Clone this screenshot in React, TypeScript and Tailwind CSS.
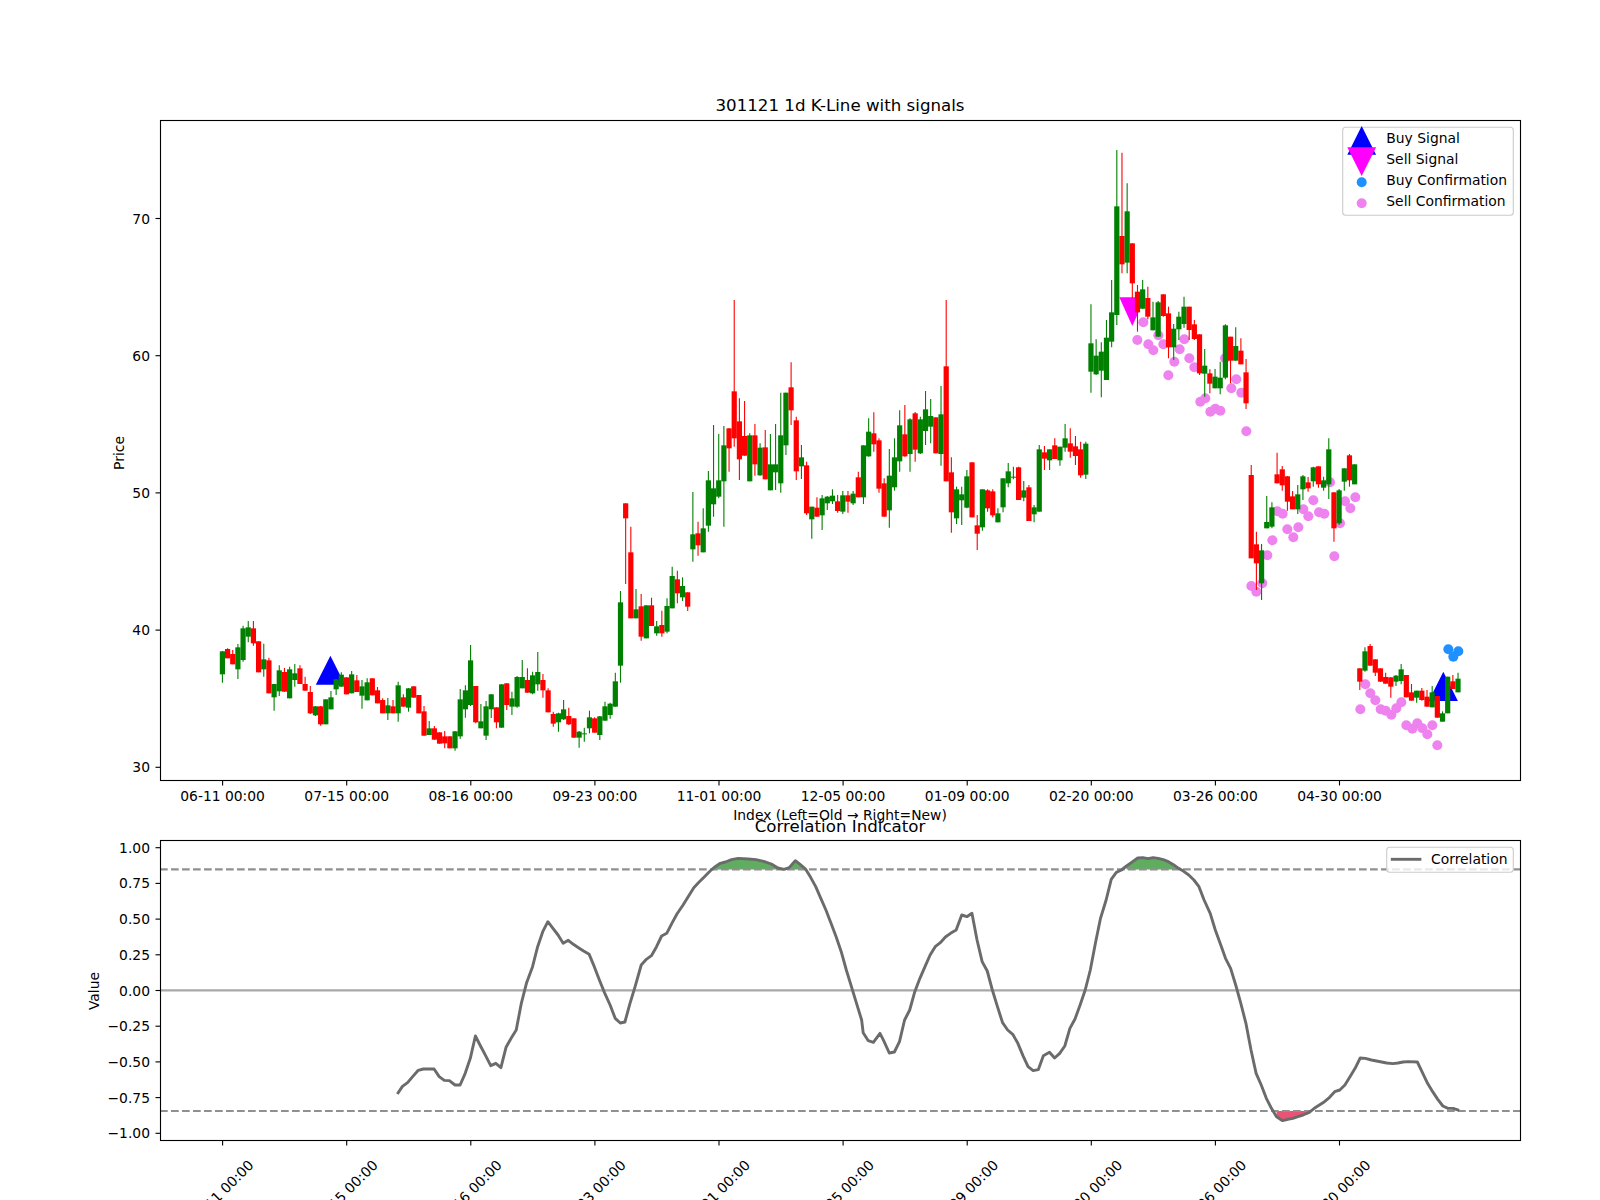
type Row = [string, number, number, number, number];

// rows are read off the chart in 3x crops: [colour, wick top, body top, body bottom, wick bottom]
const seg = (base: number, rows: Row[]): Row[] =>
  rows.map(([c, a, b, d, e]) => [c, base + a / 3, base + b / 3, base + d / 3, base + e / 3] as Row);

const candles: Row[] = [
  ...seg(480, [
    ["g", 513, 514, 583, 608], ["r", 505, 507, 535, 535], ["r", 510, 522, 553, 553], ["g", 492, 502, 568, 597],
    ["g", 437, 445, 540, 545], ["g", 423, 442, 470, 487], ["r", 423, 445, 490, 497], ["r", 484, 484, 577, 577],
    ["g", 491, 538, 568, 590], ["r", 533, 541, 640, 640], ["g", 612, 612, 652, 692], ["g", 556, 571, 634, 648],
    ["r", 564, 576, 635, 635], ["g", 560, 568, 655, 655], ["g", 552, 580, 600, 620], ["r", 556, 565, 612, 612],
    ["r", 590, 612, 632, 632], ["r", 618, 636, 700, 702], ["g", 678, 679, 706, 708], ["r", 678, 679, 733, 737],
    ["g", 658, 658, 733, 733], ["g", 633, 652, 688, 688], ["g", 597, 598, 628, 645], ["g", 577, 584, 620, 620],
    ["r", 592, 592, 643, 643], ["g", 573, 583, 640, 640], ["r", 585, 601, 636, 636], ["g", 600, 619, 647, 686],
    ["g", 595, 607, 661, 661], ["r", 595, 595, 646, 646], ["r", 621, 631, 670, 670], ["r", 655, 660, 700, 700],
    ["g", 654, 676, 700, 720], ["r", 660, 679, 700, 700], ["g", 605, 616, 700, 725], ["r", 643, 652, 680, 680],
    ["g", 624, 625, 683, 695], ["r", 619, 619, 653, 653], ["r", 645, 645, 700, 700], ["r", 678, 694, 767, 767],
    ["g", 723, 745, 765, 765], ["r", 738, 745, 779, 779], ["r", 757, 757, 791, 791], ["r", 753, 769, 790, 805],
    ["r", 769, 769, 805, 805], ["g", 753, 754, 805, 812], ["g", 627, 658, 769, 776], ["g", 616, 631, 688, 713],
    ["g", 495, 541, 675, 678], ["r", 618, 618, 727, 730], ["g", 672, 724, 745, 745], ["g", 663, 679, 767, 780],
    ["g", 642, 643, 688, 714], ["r", 682, 682, 727, 745], ["g", 613, 613, 743, 743], ["r", 610, 610, 675, 690],
    ["g", 635, 655, 680, 705], ["g", 588, 591, 680, 683], ["g", 540, 591, 625, 625], ["r", 565, 600, 638, 638],
    ["g", 575, 586, 640, 643], ["g", 516, 576, 613, 632], ["r", 582, 600, 631, 653], ["r", 625, 631, 697, 697],
    ["r", 695, 702, 731, 740], ["g", 698, 700, 727, 755], ["g", 660, 688, 718, 720], ["r", 683, 708, 733, 735],
    ["r", 715, 715, 773, 773], ["g", 753, 755, 773, 803], ["g", 743, 760, 761, 785], ["g", 692, 712, 745, 760],
    ["r", 712, 715, 758, 758], ["g", 708, 709, 765, 780], ["g", 665, 679, 722, 722], ["g", 668, 671, 705, 716],
    ["g", 578, 604, 680, 680], ["g", 333, 367, 557, 608], ["r", 70, 70, 115, 312], ["r", 140, 217, 415, 415],
    ["g", 327, 388, 415, 415], ["r", 342, 379, 470, 482], ["g", 376, 376, 475, 475], ["r", 353, 376, 438, 438],
    ["g", 423, 439, 460, 467],
  ]),
  ...seg(540, [
    ["r", 212, 255, 280, 290], ["g", 175, 198, 275, 280], ["g", 80, 108, 205, 205], ["r", 92, 118, 160, 190],
    ["g", 112, 138, 172, 183], ["r", 157, 157, 200, 213],
  ]),
  ...seg(280, [
    ["g", 636, 763, 808, 845], ["r", 725, 760, 796, 827], ["g", 685, 745, 817, 817], ["g", 573, 601, 737, 755],
    ["g", 435, 625, 673, 710], ["g", 462, 601, 650, 655], ["g", 438, 496, 604, 740], ["r", 445, 445, 505, 575],
    ["r", 60, 334, 475, 500], ["r", 355, 424, 538, 600], ["r", 363, 468, 527, 527], ["g", 460, 466, 604, 604],
    ["r", 432, 466, 553, 587], ["g", 490, 503, 586, 587], ["r", 450, 502, 598, 598], ["g", 462, 553, 631, 631],
    ["g", 432, 553, 577, 630], ["g", 338, 466, 610, 638], ["g", 338, 338, 496, 525], ["r", 247, 322, 391, 435],
    ["r", 410, 421, 574, 600], ["g", 495, 532, 559, 597], ["r", 545, 556, 700, 705], ["g", 680, 680, 718, 776],
    ["r", 652, 683, 710, 710], ["g", 645, 655, 706, 750], ["g", 648, 650, 670, 690], ["g", 628, 647, 664, 672],
    ["r", 645, 664, 693, 698], ["g", 633, 646, 695, 702], ["r", 633, 646, 665, 698], ["g", 633, 641, 670, 675],
    ["r", 575, 592, 652, 652], ["g", 496, 496, 652, 672], ["g", 415, 455, 529, 530], ["r", 397, 460, 493, 515],
    ["r", 475, 481, 626, 638], ["r", 595, 610, 710, 710], ["g", 507, 587, 691, 743], ["g", 475, 532, 622, 632],
    ["g", 391, 436, 544, 575], ["r", 375, 463, 529, 530], ["g", 415, 418, 522, 575], ["r", 396, 400, 509, 545],
    ["g", 410, 418, 520, 522], ["g", 333, 388, 453, 495], ["g", 357, 408, 440, 490], ["r", 412, 412, 520, 520],
    ["g", 318, 403, 522, 557], ["r", 60, 259, 604, 604], ["r", 532, 577, 697, 758], ["g", 620, 628, 715, 732],
    ["g", 620, 643, 661, 735], ["g", 570, 589, 683, 685], ["r", 547, 547, 712, 712], ["r", 705, 736, 761, 810],
    ["g", 628, 628, 742, 752], ["r", 628, 631, 685, 695], ["r", 628, 634, 706, 712], ["g", 685, 700, 727, 727],
    ["g", 595, 595, 682, 697], ["g", 549, 574, 610, 622], ["g", 560, 590, 591, 598], ["r", 560, 562, 660, 660],
    ["g", 603, 631, 653, 664], ["r", 615, 622, 723, 723], ["g", 675, 682, 703, 727], ["g", 495, 508, 695, 695],
    ["r", 498, 517, 536, 570], ["g", 508, 508, 541, 570], ["r", 475, 496, 537, 537], ["g", 500, 500, 541, 557],
    ["g", 432, 475, 503, 515], ["r", 445, 490, 515, 533], ["r", 468, 499, 528, 555], ["r", 485, 508, 586, 593],
    ["g", 485, 491, 584, 597],
  ]),
  ...seg(110, [
    ["g", 583, 700, 785, 848], ["g", 688, 737, 793, 795], ["g", 697, 725, 782, 862], ["g", 630, 683, 810, 810],
    ["g", 510, 607, 695, 712], ["g", 120, 289, 615, 645], ["r", 128, 378, 463, 490], ["g", 220, 304, 458, 490],
    ["r", 400, 400, 520, 565], ["r", 525, 545, 607, 665], ["g", 510, 538, 596, 597], ["r", 530, 564, 620, 628],
    ["g", 575, 622, 661, 661], ["g", 573, 577, 680, 680], ["r", 553, 553, 618, 620], ["r", 590, 610, 712, 745],
    ["g", 642, 656, 712, 750], ["g", 605, 620, 658, 690], ["g", 560, 590, 642, 653], ["r", 590, 590, 660, 690],
    ["r", 630, 643, 687, 690], ["r", 673, 673, 790, 795], ["g", 717, 767, 791, 860], ["r", 778, 790, 821, 850],
    ["g", 777, 800, 835, 835], ["g", 755, 803, 835, 853], ["g", 643, 646, 803, 808], ["r", 680, 680, 752, 820],
    ["g", 652, 708, 752, 752], ["r", 685, 722, 763, 763], ["r", 747, 787, 880, 897],
  ]),
  ...seg(420, [
    ["r", 135, 165, 415, 415], ["r", 335, 373, 430, 510], ["g", 372, 391, 490, 540], ["g", 228, 306, 325, 325],
    ["g", 247, 262, 320, 325], ["r", 98, 163, 190, 190], ["r", 138, 148, 196, 212], ["r", 168, 169, 245, 272],
    ["r", 213, 229, 268, 268], ["g", 195, 223, 268, 282], ["g", 165, 169, 208, 240], ["r", 171, 187, 205, 215],
    ["g", 140, 142, 184, 200], ["r", 139, 139, 193, 203], ["g", 170, 181, 203, 212], ["g", 55, 88, 193, 237],
    ["r", 217, 217, 325, 365], ["g", 207, 211, 310, 315], ["g", 145, 145, 185, 212], ["r", 102, 106, 181, 200],
    ["g", 133, 133, 193, 193],
  ]),
  ...seg(620, [
    ["r", 145, 145, 185, 210], ["g", 82, 94, 152, 155], ["r", 72, 78, 137, 137], ["r", 118, 118, 158, 168],
    ["r", 145, 145, 185, 185], ["r", 158, 171, 191, 191], ["r", 172, 172, 200, 233], ["g", 165, 167, 185, 198],
    ["g", 132, 148, 183, 193], ["r", 165, 165, 232, 232], ["r", 192, 217, 242, 242], ["g", 212, 212, 233, 248],
    ["r", 204, 212, 240, 242], ["r", 210, 230, 260, 260], ["g", 198, 217, 262, 262], ["r", 228, 228, 293, 293],
    ["g", 274, 280, 305, 305], ["g", 170, 170, 280, 280], ["r", 165, 184, 207, 207], ["g", 158, 176, 217, 217],
  ]),
];

const barX = (i: number) => 222.4 + 5.17 * i;

const sellDots: [number, number][] = [
  ...([
    [190, 637], [172, 690], [205, 703], [220, 721], [235, 676], [250, 703], [265, 796], [283, 755], [299, 718],
    [313, 688], [328, 745], [343, 772], [361, 875], [376, 865], [391, 905], [406, 896], [421, 902], [435, 745],
    [454, 835], [469, 808], [484, 848], [499, 964],
  ] as [number, number][]).map(([x, y]) => [1080 + x / 3, 110 + y / 3] as [number, number]),
  ...([
    [154, 498], [169, 515], [187, 490], [202, 406], [217, 361], [232, 274], [248, 281], [262, 328], [280, 352],
    [295, 322], [310, 268], [325, 289], [340, 241], [357, 277], [373, 281], [390, 187], [403, 409], [420, 310],
    [435, 244], [451, 265], [466, 232],
  ] as [number, number][]).map(([x, y]) => [1200 + x / 3, 420 + y / 3] as [number, number]),
  ...([
    [121, 268], [136, 193], [151, 220], [166, 241], [182, 268], [197, 272], [214, 284], [229, 265], [244, 247],
    [259, 316], [277, 326], [292, 310], [307, 325], [322, 343], [337, 316], [352, 376],
  ] as [number, number][]).map(([x, y]) => [1320 + x / 3, 620 + y / 3] as [number, number]),
];

const buyDots: [number, number][] = [
  [1320 + 385 / 3, 620 + 88 / 3],
  [1320 + 400 / 3, 620 + 110 / 3],
  [1320 + 415 / 3, 620 + 94 / 3],
];

const corrLeft: [number, number][] = [
  [622, 912], [632, 889], [642, 878], [652, 860], [663, 841], [673, 837], [694, 837], [704, 860], [714, 871],
  [724, 872], [735, 885], [745, 885], [755, 850], [765, 805], [775, 738], [785, 768], [795, 797], [805, 827],
  [815, 820], [825, 833], [835, 772], [845, 745], [855, 720], [865, 640], [875, 580], [887, 530], [897, 470],
  [907, 425], [917, 395], [927, 415], [937, 435], [947, 460], [957, 451], [967, 463], [977, 473], [987, 483],
  [998, 493], [1008, 530], [1018, 570], [1028, 608], [1039, 645], [1049, 685], [1059, 699], [1068, 696],
  [1078, 640], [1088, 590], [1100, 525], [1110, 508], [1120, 497], [1130, 470], [1140, 438], [1150, 430],
  [1160, 400], [1170, 372], [1182, 345], [1192, 320], [1203, 293], [1213, 277], [1223, 262], [1235, 243],
  [1245, 230], [1255, 220], [1265, 216], [1277, 209], [1290, 205], [1310, 207], [1325, 209], [1340, 214],
  [1355, 222], [1368, 234], [1380, 238], [1390, 233], [1402, 212], [1412, 224], [1422, 237], [1432, 262],
  [1442, 290], [1452, 325], [1462, 360], [1472, 400], [1482, 440], [1492, 485], [1502, 540], [1512, 590],
  [1522, 640], [1532, 690], [1535, 728], [1545, 752], [1555, 757], [1568, 730],
];

const corrRight: [number, number][] = [
  [164, 752], [175, 789], [185, 786], [195, 755], [205, 690], [215, 660], [225, 605], [235, 565], [245, 530],
  [255, 495], [265, 470], [275, 458], [285, 441], [295, 430], [306, 420], [317, 375], [327, 380], [337, 370],
  [347, 450], [357, 515], [367, 543], [377, 600], [387, 650], [397, 698], [407, 720], [417, 733], [427, 760],
  [437, 797], [447, 830], [457, 842], [467, 839], [477, 797], [489, 787], [499, 804], [509, 790], [519, 768],
  [529, 715], [539, 687], [549, 645], [559, 600], [569, 540], [579, 460], [589, 385], [600, 330], [610, 268],
  [620, 247], [630, 240], [640, 228], [652, 215], [662, 204], [672, 203], [682, 206], [692, 203], [702, 205],
  [712, 209], [722, 215], [732, 224], [742, 235], [752, 244], [762, 255], [772, 270], [782, 290], [792, 330],
  [804, 370], [814, 420], [824, 462], [834, 505], [844, 535], [854, 585], [864, 640], [874, 700], [884, 780],
  [894, 850], [904, 885], [914, 925], [924, 955], [934, 980], [946, 992], [956, 988], [966, 985], [976, 980],
  [986, 975], [998, 967], [1008, 955], [1018, 945], [1028, 935], [1038, 922], [1048, 905], [1058, 900],
  [1068, 885], [1078, 860], [1088, 835], [1098, 804], [1108, 805], [1120, 810], [1130, 813], [1140, 816],
  [1150, 819], [1162, 821], [1172, 819], [1182, 816], [1192, 815], [1210, 816], [1220, 848], [1230, 880],
  [1240, 905], [1250, 928], [1260, 948], [1270, 955], [1280, 955], [1292, 961],
];

const corr: [number, number][] = [
  ...corrLeft.map(([x, y]) => [80 + x / 1.96, 790 + y / 3] as [number, number]),
  ...corrRight.map(([x, y]) => [800 + x / 1.96, 790 + y / 3] as [number, number]),
];

const HIGH_Y = 869.4;
const LOW_Y = 1111;

// consecutive runs past a threshold, closed back on the threshold line
function runs(test: (y: number) => boolean, level: number) {
  const out: string[] = [];
  let cur: [number, number][] = [];
  const flush = () => {
    if (cur.length > 1) {
      const pts = [[cur[0][0], level], ...cur, [cur[cur.length - 1][0], level]];
      out.push(pts.map((p) => p.join(",")).join(" "));
    }
    cur = [];
  };
  corr.forEach((p) => {
    if (test(p[1])) cur.push(p);
    else flush();
  });
  flush();
  return out;
}

const ticks = [
  "06-11 00:00", "07-15 00:00", "08-16 00:00", "09-23 00:00", "11-01 00:00",
  "12-05 00:00", "01-09 00:00", "02-20 00:00", "03-26 00:00", "04-30 00:00",
];
const tickX = (i: number) => 222.6 + 124.1 * i;

const priceTicks = [30, 40, 50, 60, 70];
const priceY = (p: number) => 767.3 - (p - 30) * 13.72;
const valueTicks = ["1.00", "0.75", "0.50", "0.25", "0.00", "−0.25", "−0.50", "−0.75", "−1.00"];

function Triangle({ x, top, bottom, half, color }: { x: number; top: number; bottom: number; half: number; color: string }) {
  // top < bottom, apex on whichever side the marker points: half > 0 points up, half < 0 down
  const pts =
    half > 0
      ? `${x},${top} ${x - half},${bottom} ${x + half},${bottom}`
      : `${x},${bottom} ${x + half},${top} ${x - half},${top}`;
  return <polygon points={pts} fill={color} />;
}

function PriceChart() {
  return (
    <svg viewBox="0 116 1600 710" className="block h-[710px] w-[1600px] shrink-0 text-[13.89px]">
      {sellDots.map(([x, y], i) => (
        <circle key={i} cx={x} cy={y} r={5} fill="#ee82ee" />
      ))}
      {buyDots.map(([x, y], i) => (
        <circle key={i} cx={x} cy={y} r={5} fill="#1e90ff" />
      ))}
      <Triangle x={330.4} top={655.7} bottom={684.7} half={14.6} color="#0000ff" />
      <Triangle x={1443.3} top={671.7} bottom={701} half={14.6} color="#0000ff" />
      <Triangle x={1132.3} top={297.3} bottom={326} half={-13} color="#ff00ff" />
      {candles.map(([c, hi, top, bot, lo], i) => {
        const color = c === "g" ? "#008000" : "#ff0000";
        const x = barX(i);
        return (
          <g key={i}>
            <line x1={x} x2={x} y1={hi} y2={lo} stroke={color} strokeWidth={1.1} />
            <rect x={x - 2.6} y={top} width={5.2} height={Math.max(bot - top, 1)} fill={color} />
          </g>
        );
      })}

      <rect x={160.5} y={120.5} width={1360} height={660} fill="none" stroke="#000" strokeWidth={1.11} />
      {ticks.map((t, i) => (
        <g key={t}>
          <line x1={tickX(i)} x2={tickX(i)} y1={780.5} y2={785.5} stroke="#000" strokeWidth={1.11} />
          <text x={tickX(i)} y={801} textAnchor="middle">{t}</text>
        </g>
      ))}
      {priceTicks.map((p) => (
        <g key={p}>
          <line x1={155.5} x2={160.5} y1={priceY(p)} y2={priceY(p)} stroke="#000" strokeWidth={1.11} />
          <text x={150} y={priceY(p) + 5} textAnchor="end">{p}</text>
        </g>
      ))}
      <text transform="translate(124 453) rotate(-90)" textAnchor="middle">Price</text>
      <text x={840} y={820} textAnchor="middle">Index (Left=Old → Right=New)</text>

      <rect x={1342.7} y={127.3} width={170.6} height={88} rx={3} fill="#fff" fillOpacity={0.8} stroke="#ccc" strokeWidth={1.1} />
      <Triangle x={1361.7} top={126} bottom={154.7} half={14.4} color="#0000ff" />
      <Triangle x={1361.7} top={147.3} bottom={176} half={-14.4} color="#ff00ff" />
      <circle cx={1361.7} cy={182.3} r={5} fill="#1e90ff" />
      <circle cx={1361.7} cy={203.3} r={5} fill="#ee82ee" />
      <text x={1386.3} y={143}>Buy Signal</text>
      <text x={1386.3} y={164}>Sell Signal</text>
      <text x={1386.3} y={185}>Buy Confirmation</text>
      <text x={1386.3} y={206}>Sell Confirmation</text>
    </svg>
  );
}

function CorrelationChart() {
  const line = corr.map((p) => p.join(",")).join(" ");
  return (
    <svg viewBox="0 836 1600 364" className="block h-[364px] w-[1600px] shrink-0 text-[13.89px]">
      {runs((y) => y < HIGH_Y, HIGH_Y).map((pts, i) => (
        <polygon key={i} points={pts} fill="#5fae5f" />
      ))}
      {runs((y) => y > LOW_Y, LOW_Y).map((pts, i) => (
        <polygon key={i} points={pts} fill="#ea5474" />
      ))}
      <line x1={160} x2={1520} y1={990.4} y2={990.4} stroke="#a8a8a8" strokeWidth={2.08} />
      <line x1={160} x2={1520} y1={HIGH_Y} y2={HIGH_Y} stroke="#909090" strokeWidth={2.08} strokeDasharray="7.7 3.3" />
      <line x1={160} x2={1520} y1={LOW_Y} y2={LOW_Y} stroke="#909090" strokeWidth={2.08} strokeDasharray="7.7 3.3" />
      <polyline points={line} fill="none" stroke="#6b6b6b" strokeWidth={2.9} strokeLinejoin="round" />

      <rect x={160.5} y={840.5} width={1360} height={300} fill="none" stroke="#000" strokeWidth={1.11} />
      {ticks.map((t, i) => (
        <g key={t}>
          <line x1={tickX(i)} x2={tickX(i)} y1={1140.5} y2={1145.5} stroke="#000" strokeWidth={1.11} />
          <text transform={`translate(${tickX(i) + 2} 1196) rotate(-45)`} textAnchor="middle">{t}</text>
        </g>
      ))}
      {valueTicks.map((v, i) => {
        const y = 847.7 + i * 35.7;
        return (
          <g key={v}>
            <line x1={155.5} x2={160.5} y1={y} y2={y} stroke="#000" strokeWidth={1.11} />
            <text x={150} y={y + 5} textAnchor="end">{v}</text>
          </g>
        );
      })}
      <text transform="translate(99 991) rotate(-90)" textAnchor="middle">Value</text>

      <rect x={1386.7} y={847.3} width={126.6} height={25} rx={3} fill="#fff" fillOpacity={0.8} stroke="#ccc" strokeWidth={1.1} />
      <line x1={1390.8} x2={1421.4} y1={859.3} y2={859.3} stroke="#6b6b6b" strokeWidth={2.9} />
      <text x={1431} y={864}>Correlation</text>
    </svg>
  );
}

export default function App() {
  return (
    <div className="flex h-[1200px] w-[1600px] flex-col items-center overflow-hidden bg-white pt-[96px] font-['DejaVu_Sans',sans-serif] text-black">
      <h2 className="ml-[80px] h-[20px] text-[16.67px] leading-[20px] font-normal">301121 1d K-Line with signals</h2>
      <PriceChart />
      <h2 className="z-10 -mt-[9px] ml-[80px] h-[19px] text-[16.67px] leading-[19px] font-normal">Correlation Indicator</h2>
      <CorrelationChart />
    </div>
  );
}
